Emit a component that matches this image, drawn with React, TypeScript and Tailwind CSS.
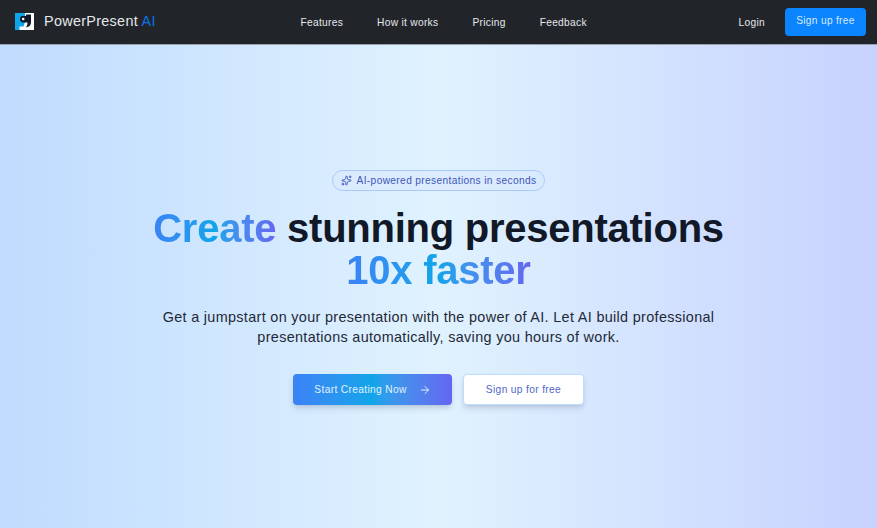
import React from 'react';
import { ArrowRight, Sparkles } from 'lucide-react';

const navLinks = ['Features', 'How it works', 'Pricing', 'Feedback'];

const Logo = () => (
  <svg width="19" height="17" viewBox="0 0 19 17">
    <rect width="19" height="17" fill="#0ea5e9" />
    <path d="M10 0H19V17H4.5V13.5H8.5L10 9Z" fill="#ffffff" />
    <path d="M7 3H11V1.5H16V9C16 12 14.5 14 11 14.5C12 13 12.5 11.5 12.5 9.5H8C6.2 9.5 5 8 5 6.2C5 4.5 5.8 3 7 3Z" fill="#111827" />
    <circle cx="8.2" cy="6" r="1.3" fill="#ffffff" />
  </svg>
);

export default function App() {
  return (
    <div className="h-[528px] w-[877px] overflow-hidden font-['Liberation_Sans',Arial,sans-serif]">
      <nav className="flex h-[45px] items-center justify-between border-b border-gray-400 bg-[#212529] pl-[15px] pr-[11px]">
        <div className="flex items-center gap-[10px]">
          <Logo />
          <span className="text-[14.4px] tracking-[0.3px] text-[#e5e7eb]">
            PowerPresent <span className="text-[#0b72e7]">AI</span>
          </span>
        </div>
        <div className="mr-[7px] flex items-center gap-[34px] pt-px">
          {navLinks.map((link) => (
            <a key={link} className="text-[10.2px] font-medium tracking-[0.3px] text-[#e5e7eb]">
              {link}
            </a>
          ))}
        </div>
        <div className="flex items-center gap-[20px]">
          <a className="pt-px text-[10.2px] tracking-[0.3px] text-[#e5e7eb]">Login</a>
          <button className="h-[28px] w-[81px] rounded-[4px] bg-[#0a84ff] pb-[2px] text-[10.2px] tracking-[0.3px] text-[#dbeafe]">
            Sign up free
          </button>
        </div>
      </nav>

      <main className="flex h-[483px] flex-col items-center bg-gradient-to-r from-[#bfdbfe] via-[#e0f2fe] to-[#c7d2fe] pt-[125px]">
        <div className="flex h-[21px] w-[213px] items-center justify-center gap-[5px] rounded-full border border-[#a9c9fb] bg-[#dbeafe]/60 text-[10.2px] tracking-[0.35px] text-[#4056b8]">
          <Sparkles className="h-[11px] w-[11px]" />
          <span>AI-powered presentations in seconds</span>
        </div>

        <h1 className="mt-[16px] text-center text-[40px] leading-[42px] font-bold tracking-[-0.25px] text-[#111827]">
          <span className="bg-gradient-to-r from-[#3b82f6] via-[#0ea5e9] to-[#6366f1] bg-clip-text text-transparent">Create</span> stunning presentations
          <br />
          <span className="bg-gradient-to-r from-[#3b82f6] via-[#0ea5e9] to-[#6366f1] bg-clip-text text-transparent">10x faster</span>
        </h1>

        <p className="mt-[16px] w-[580px] text-center text-[14.4px] leading-[20px] tracking-[0.33px] text-[#1f2937]">
          Get a jumpstart on your presentation with the power of AI. Let AI build professional presentations automatically, saving you hours of work.
        </p>

        <div className="mt-[27px] flex items-center gap-[11px]">
          <button className="flex h-[31px] w-[159px] items-center justify-center gap-[12px] rounded-[4px] bg-gradient-to-r from-[#3b82f6] via-[#0ea5e9] to-[#6366f1] text-[10.2px] tracking-[0.35px] text-[#e0f2fe] shadow-md shadow-slate-400/40">
            Start Creating Now
            <ArrowRight className="h-[12px] w-[12px]" />
          </button>
          <button className="h-[31px] w-[121px] rounded-[4px] border border-[#bfdbfe] bg-white text-[10.2px] tracking-[0.35px] text-[#4f66c9] shadow-md shadow-slate-400/40">
            Sign up for free
          </button>
        </div>
      </main>
    </div>
  );
}
